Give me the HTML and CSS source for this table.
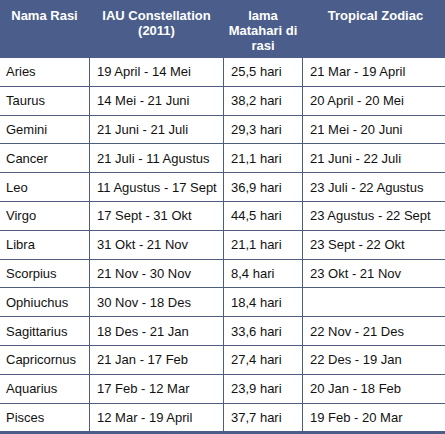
FILE: index.html
```html
<!DOCTYPE html>
<html lang="id">
<head>
<meta charset="utf-8">
<title>Rasi</title>
<link rel="stylesheet" href="styles.css">
</head>
<body>
<table class="zodiac">
  <colgroup>
    <col class="c1"><col class="c2"><col class="c3"><col class="c4">
  </colgroup>
  <thead>
    <tr>
      <th>Nama Rasi</th>
      <th>IAU Constellation (2011)</th>
      <th>lama Matahari di rasi</th>
      <th>Tropical Zodiac</th>
    </tr>
  </thead>
  <tbody>
    <tr><td>Aries</td><td>19 April - 14 Mei</td><td>25,5 hari</td><td>21 Mar - 19 April</td></tr>
    <tr><td>Taurus</td><td>14 Mei - 21 Juni</td><td>38,2 hari</td><td>20 April - 20 Mei</td></tr>
    <tr><td>Gemini</td><td>21 Juni - 21 Juli</td><td>29,3 hari</td><td>21 Mei - 20 Juni</td></tr>
    <tr><td>Cancer</td><td>21 Juli - 11 Agustus</td><td>21,1 hari</td><td>21 Juni - 22 Juli</td></tr>
    <tr><td>Leo</td><td>11 Agustus - 17 Sept</td><td>36,9 hari</td><td>23 Juli - 22 Agustus</td></tr>
    <tr><td>Virgo</td><td>17 Sept - 31 Okt</td><td>44,5 hari</td><td>23 Agustus - 22 Sept</td></tr>
    <tr><td>Libra</td><td>31 Okt - 21 Nov</td><td>21,1 hari</td><td>23 Sept - 22 Okt</td></tr>
    <tr><td>Scorpius</td><td>21 Nov - 30 Nov</td><td>8,4 hari</td><td>23 Okt - 21 Nov</td></tr>
    <tr><td>Ophiuchus</td><td>30 Nov - 18 Des</td><td>18,4 hari</td><td></td></tr>
    <tr><td>Sagittarius</td><td>18 Des - 21 Jan</td><td>33,6 hari</td><td>22 Nov - 21 Des</td></tr>
    <tr><td>Capricornus</td><td>21 Jan - 17 Feb</td><td>27,4 hari</td><td>22 Des - 19 Jan</td></tr>
    <tr><td>Aquarius</td><td>17 Feb - 12 Mar</td><td>23,9 hari</td><td>20 Jan - 18 Feb</td></tr>
    <tr><td>Pisces</td><td>12 Mar - 19 April</td><td>37,7 hari</td><td>19 Feb - 20 Mar</td></tr>
  </tbody>
</table>
</body>
</html>
```
FILE: styles.css
```css
html, body {
  margin: 0;
  padding: 0;
  background: #ffffff;
  overflow: hidden;
}

.zodiac {
  border-collapse: collapse;
  table-layout: fixed;
  width: 449px;
  margin-left: -1px;
  font-family: "Liberation Sans", Arial, Helvetica, sans-serif;
  font-size: 13px;
  color: #111111;
  border-bottom: 3px solid #4b5d88;
}

.c1 { width: 90px; }
.c2 { width: 134px; }
.c3 { width: 79px; }
.c4 { width: 146px; }

.zodiac th {
  background: #4b5e8b;
  color: #ffffff;
  font-weight: bold;
  text-align: center;
  vertical-align: top;
  line-height: 15px;
  padding: 8px 4px 4px;
  height: 45px;
  border: 1px solid #4b5e8b;
  border-top: none;
}

.zodiac td {
  height: 27.8px;
  padding: 0 6px 0 7px;
  vertical-align: middle;
  white-space: nowrap;
  border: 1px solid #4f5d7c;
  line-height: 15px;
}

.zodiac td:first-child {
  padding-left: 6px;
}

.zodiac tbody tr:first-child td {
  border-top: none;
}
```
